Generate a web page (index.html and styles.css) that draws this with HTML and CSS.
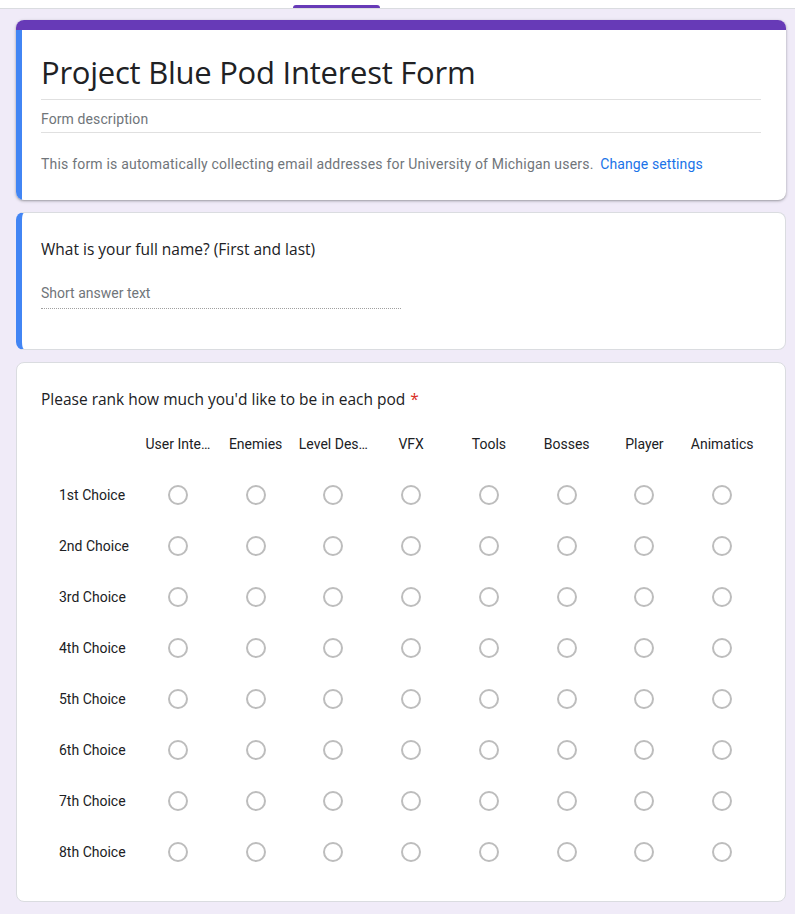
FILE: index.html
```html
<!DOCTYPE html>
<html>
<head>
<meta charset="utf-8">
<link rel="stylesheet" href="styles.css">
</head>
<body>
<div class="topbar"><div class="tab"></div></div>
<main class="page">
  <section class="card card-header">
    <div class="card-stripe"></div>
    <div class="card-body has-accent">
      <h1 class="form-title">Project Blue Pod Interest Form</h1>
      <div class="form-desc">Form description</div>
      <p class="notice">This form is automatically collecting email addresses for University of Michigan users. <a class="link" href="#">Change settings</a></p>
    </div>
  </section>

  <section class="card card-q has-accent">
    <div class="q-title">What is your full name? (First and last)</div>
    <div class="short-answer">Short answer text</div>
  </section>

  <section class="card card-grid">
    <div class="q-title">Please rank how much you'd like to be in each pod <span class="req">*</span></div>
    <div class="grid">
      <div class="head"></div>
      <div class="head" title="User Interface">User Inte…</div>
      <div class="head">Enemies</div>
      <div class="head" title="Level Design">Level Des…</div>
      <div class="head">VFX</div>
      <div class="head">Tools</div>
      <div class="head">Bosses</div>
      <div class="head">Player</div>
      <div class="head">Animatics</div>
    </div>
    <div id="rows"></div>
  </section>
</main>
<script>
  var labels = ["1st Choice","2nd Choice","3rd Choice","4th Choice","5th Choice","6th Choice","7th Choice","8th Choice"];
  var rows = document.getElementById("rows");
  labels.forEach(function (l) {
    var r = document.createElement("div");
    r.className = "grid row";
    var lab = document.createElement("div");
    lab.className = "row-label";
    lab.textContent = l;
    r.appendChild(lab);
    for (var i = 0; i < 8; i++) {
      var c = document.createElement("div");
      c.className = "cell";
      var rd = document.createElement("span");
      rd.className = "radio";
      c.appendChild(rd);
      r.appendChild(c);
    }
    rows.appendChild(r);
  });
</script>
</body>
</html>
```
FILE: styles.css
```css
* { box-sizing: border-box; }
html, body { margin: 0; padding: 0; }
body {
  background: #f0ebf8;
  font-family: Roboto, "Liberation Sans", Arial, sans-serif;
  color: #202124;
}
.topbar {
  height: 9px;
  background: #fff;
  border-bottom: 1px solid #dadce0;
  position: relative;
}
.tab {
  position: absolute;
  left: 293px;
  top: 5px;
  width: 87px;
  height: 3px;
  background: #673ab7;
  border-radius: 3px 3px 0 0;
}
.page {
  margin: 11px 9px 0 16px;
  display: flex;
  flex-direction: column;
  gap: 12px;
  padding-bottom: 12px;
}
.card {
  background: #fff;
  border-radius: 8px;
  border: 1px solid #dadce0;
  overflow: hidden;
}
.card-header {
  border: none;
  box-shadow: 0 1px 2px rgba(60,64,67,.35), 0 1px 3px 1px rgba(60,64,67,.12);
}
.card-stripe { height: 10px; background: #673ab7; }
.has-accent { border-left: 6px solid #4285f4; }
.card-header .card-body { padding: 22px 25px 26px 19px; }
.form-title {
  margin: 0;
  font-family: "Open Sans", sans-serif;
  font-weight: 400;
  font-size: 31px;
  line-height: 40px;
  letter-spacing: -0.25px;
  padding-bottom: 7px;
  border-bottom: 1px solid #e0e0e0;
  color: #202124;
}
.form-desc {
  font-size: 14px;
  line-height: 20px;
  color: #70757a;
  padding: 9px 0 3px;
  border-bottom: 1px solid #e0e0e0;
  letter-spacing: 0.1px;
}
.notice {
  margin: 21px 0 0;
  font-size: 14px;
  line-height: 20px;
  color: #70757a;
  letter-spacing: 0.2px;
}
.link { color: #1a73e8; text-decoration: none; margin-left: 3px; letter-spacing: 0.1px; }
.card-q { padding: 24px 25px 40px 19px; }
.q-title {
  font-family: "Open Sans", sans-serif;
  font-size: 15.5px;
  line-height: 24px;
  color: #202124;
}
.req { color: #d93025; margin-left: 1px; }
.short-answer {
  margin-top: 22px;
  width: 360px;
  font-size: 14px;
  line-height: 20px;
  color: #70757a;
  padding-bottom: 5px;
  border-bottom: 1px dotted #a0a0a0;
}
.card-grid { padding: 24px 24px 24px 24px; }
.card-grid .q-title { margin-bottom: 8px; }
.grid {
  display: grid;
  grid-template-columns: 98px repeat(8, 1fr);
  width: 720px;
}
.head {
  height: 50px;
  display: flex;
  align-items: center;
  justify-content: center;
  font-size: 14px;
  color: #202124;
  white-space: nowrap;
}
.row { height: 51px; }
.row-label {
  display: flex;
  align-items: center;
  padding-left: 18px;
  font-size: 14px;
  color: #202124;
}
.cell {
  display: flex;
  align-items: center;
  justify-content: center;
}
.radio {
  width: 20px;
  height: 20px;
  border-radius: 50%;
  border: 2px solid #bdbdbd;
}
```
